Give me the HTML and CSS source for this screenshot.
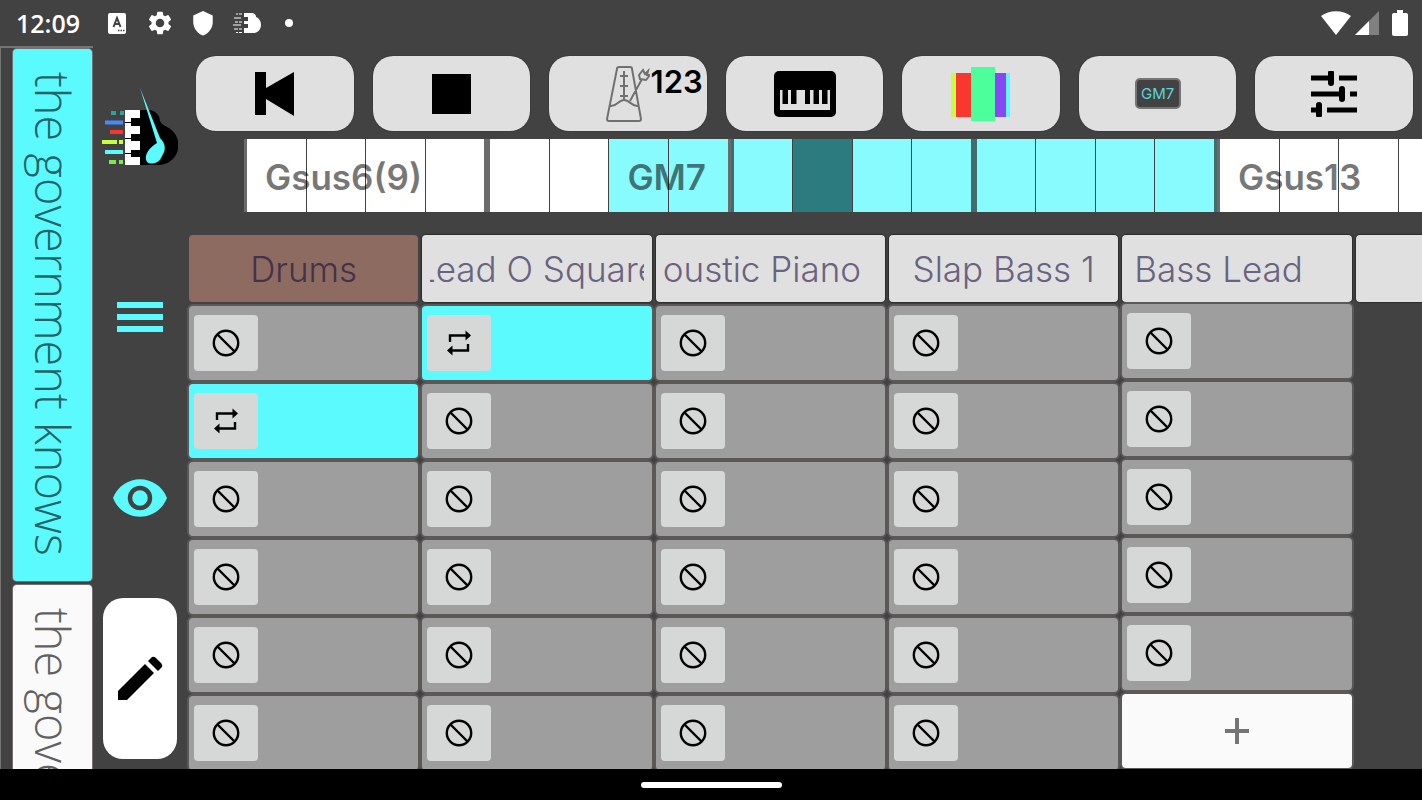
FILE: index.html
```
<!DOCTYPE html>
<html lang="en">
<head>
    <meta charset="UTF-8">
    <meta name="viewport" content="width=device-width, initial-scale=1.0">
    <title>the government knows</title>
    <link rel="stylesheet" href="styles.css">
</head>
<body>
    <svg class="sprite" aria-hidden="true">
        <symbol id="ban" viewBox="0 0 28 28">
            <circle cx="14" cy="14" r="12.2" fill="none" stroke="#000" stroke-width="2.4"/>
            <path d="M5.5 5.5l17 17" stroke="#000" stroke-width="2.4"/>
        </symbol>
        <symbol id="loop" viewBox="0 0 28 28">
            <path d="M5 13V6.500h17M23 15v6.500H6" fill="none" stroke="#000" stroke-width="2.4"/>
            <path d="M20.500 1.500l5.500 5-5.500 5zM7.500 16.500l-5.500 5 5.500 5z"/>
        </symbol>
    </svg>

    <!-- Status bar -->
    <header class="status-bar">
        <span class="clock">12:09</span>
        <svg class="status-icon" viewBox="0 0 26 26" fill="#fff">
            <rect x="4" y="3" width="18" height="21" rx="2"/>
            <path d="M9.500 17L13 8l3.500 9M10.500 14h5" fill="none" stroke="#424242" stroke-width="2"/>
            <path d="M14 20.500h1.500M16.500 20.500H18M19 20.500h1.500" stroke="#424242" stroke-width="1.500"/>
        </svg>
        <svg class="status-icon" viewBox="1 1 22 22" fill="#fff">
            <path d="M19.140 12.940c.04-.3.06-.61.06-.94s-.02-.64-.07-.94l2.030-1.580a.49.49 0 0 0 .12-.61l-1.920-3.320a.49.49 0 0 0-.59-.22l-2.390.96a7 7 0 0 0-1.620-.94l-.36-2.540A.48.48 0 0 0 13.920 2.400h-3.840a.48.48 0 0 0-.47.410l-.36 2.540a7 7 0 0 0-1.620.94l-2.390-.96a.48.48 0 0 0-.59.220L2.740 8.870a.48.48 0 0 0 .12.610l2.030 1.580a6 6 0 0 0 0 1.880l-2.030 1.580a.49.49 0 0 0-.12.610l1.920 3.320c.12.220.37.290.59.220l2.390-.96c.5.380 1.030.7 1.620.94l.36 2.540c.05.240.24.410.48.410h3.840c.24 0 .44-.17.470-.41l.36-2.540a7 7 0 0 0 1.620-.94l2.390.96c.22.080.47 0 .59-.22l1.920-3.320a.48.48 0 0 0-.12-.61zM12 15.600a3.600 3.600 0 1 1 0-7.200 3.600 3.600 0 0 1 0 7.200z"/>
        </svg>
        <svg class="status-icon" viewBox="1 0 22 24" fill="#fff">
            <path d="M12 1L3 5v6c0 5.600 3.800 10.700 9 12.500 5.200-1.800 9-6.900 9-12.500V5z"/>
        </svg>
        <svg class="status-piano" viewBox="0 0 28 22" fill="#fff">
            <path d="M15 1h3c4 0 5 2 5 4 3 1 5 4 5 8s-3 8-7 8h-6z"/>
            <path d="M11 1h4v4h-4zM11 9h4v3h-4zM11 16h4v5h-4z"/>
            <path d="M3 2h2M6 2h3M1 6h7M2 10h3M6 10h3M0 13h8M1 17h4M6 17h3M3 20.500h2M6 20.500h3" stroke="#fff" stroke-width="1.200"/>
        </svg>
        <span class="status-dot"></span>
        <span class="status-right">
            <svg width="30" height="26" viewBox="0 0 30 26" fill="#fff">
                <path d="M0 6C8-.5 22-.5 30 6L15 25z"/>
            </svg>
            <svg width="24" height="24" viewBox="0 0 24 24" fill="#fff">
                <path d="M24 0v24H0z" fill="#808080"/>
                <path d="M14 10v14H0z"/>
            </svg>
            <svg width="16" height="26" viewBox="0 0 16 26" fill="#fff">
                <path d="M5 0h6v3h3a2 2 0 0 1 2 2v19a2 2 0 0 1-2 2H2a2 2 0 0 1-2-2V5a2 2 0 0 1 2-2h3z"/>
            </svg>
        </span>
    </header>

    <div class="app">
        <!-- Sections -->
        <nav class="sections">
            <button class="section active">the government knows</button>
            <button class="section">the government knows</button>
        </nav>

        <aside class="rail">
            <svg class="logo" viewBox="0 0 76 78">
                <path d="M38 22h8c8 0 12 6 12 11 2 4 4 4 7 6a20 20 0 0 1-10 38H38z" fill="#000"/>
                <path d="M23 22h15v55H23z" fill="#fff"/>
                <path d="M23 34.500h8M23 50.500h8M23 65.500h8" stroke="#000" stroke-width="1.200"/>
                <path d="M29 30h10v8H29zM29 46h10v7H29zM29 62h10v7H29z" fill="#000"/>
                <path d="M9 25h5M18 25h4" stroke="#26a69a" stroke-width="4"/>
                <path d="M3 34.500h18" stroke="#448aff" stroke-width="4"/>
                <path d="M8 44h13" stroke="#f9372f" stroke-width="4"/>
                <path d="M0 54h15M17 54h4" stroke="#c6ff41" stroke-width="4"/>
                <path d="M3 64h18" stroke="#5bfaff" stroke-width="4"/>
                <path d="M7 74h7M17 74h4" stroke="#76ee3f" stroke-width="4"/>
                <path d="M38 0l20 50c6 6 6 12 2 18-3 8-11 9-15 6-4-7 3-15 10-19z" fill="#5bfaff"/>
            </svg>
            <button class="rail-button menu" aria-label="Menu"><i></i><i></i><i></i></button>
            <button class="rail-button" aria-label="View">
                <svg width="56" height="40" viewBox="0 0 56 40">
                    <path d="M1 20C11-5 45-5 55 20 45 45 11 45 1 20z" fill="#5bfaff"/>
                    <circle cx="28" cy="20" r="10" fill="none" stroke="#424242" stroke-width="4.500"/>
                </svg>
            </button>
            <button class="edit-button" aria-label="Edit">
                <svg width="46" height="46" viewBox="0 0 46 46">
                    <path d="M1 36L28 9l9 9-27 27H1zM31 6l4-4q2-1 4 1l5 5q2 2 1 4l-4 4z"/>
                </svg>
            </button>
        </aside>

        <main class="main">
            <div class="toolbar">
                <button class="tool" aria-label="Rewind">
                    <svg width="40" height="44" viewBox="0 0 40 44"><path d="M0 0h11v16L39 0v44L11 27v16H0z"/></svg>
                </button>
                <button class="tool" aria-label="Stop">
                    <svg width="40" height="40" viewBox="0 0 40 40"><path d="M1 0h39v40H1z"/></svg>
                </button>
                <button class="tool" aria-label="Metronome">
                    <svg class="metronome" width="44" height="56" viewBox="0 0 44 56" fill="none" stroke="#707070" stroke-width="2">
                        <path d="M13 1h11q2 0 2 2l9 50q0 2-2 2H3q-2 0-2-2L11 3q0-2 2-2zM4 40c7 1 8-6 14-6s8 7 14 6M18 5v29M14 10h8M14 20h8M14 30h8M24 35L36 13M34 13l-1-4 4-5 2 4 3-3-1 4 3 0-4 5z"/>
                    </svg>
                    <span class="count">123</span>
                </button>
                <button class="tool" aria-label="Keyboard">
                    <svg width="62" height="46" viewBox="0 0 62 46">
                        <rect width="62" height="46" rx="5"/>
                        <path d="M6 19h50v20H6z" fill="#e0e0e0"/>
                        <path d="M8.500 19H14v14H8.500zM17 19h5.500v14H17zM31 19h5v14h-5zM39.500 19H45v14h-5.500zM48 19h5.500v14H48z"/>
                    </svg>
                </button>
                <button class="tool" aria-label="Colors">
                    <svg width="60" height="56" viewBox="0 0 60 56">
                        <path d="M0 7h6v44H0z" fill="#c6ff41"/>
                        <path d="M5 7h16v44H5z" fill="#f9372f"/>
                        <path d="M44 7h11v44H44z" fill="#8a45f5"/>
                        <path d="M55 7h4v44h-4z" fill="#5bfaff"/>
                        <path d="M20 1h24v54H20z" fill="#4cff9a"/>
                    </svg>
                </button>
                <button class="tool" aria-label="Chord"><span class="badge">GM7</span></button>
                <button class="tool" aria-label="Mixer">
                    <svg width="46" height="46" viewBox="0 0 46 46" stroke="#000" stroke-width="5" fill="none">
                        <path d="M0 7h20M28 7h18M0 23h30M39 23h7M0 39h7M16 39h30"/>
                        <path d="M20 2v10M31 18v10M8 34v10" stroke-width="6" stroke-linecap="round"/>
                    </svg>
                </button>
            </div>

            <!-- Harmony -->
            <div class="beats">
                <div class="measure"><i><span class="chord">Gsus6(9)</span></i><i></i><i></i><i></i></div>
                <div class="measure"><i></i><i></i><i class="on"><span class="chord">GM7</span></i><i class="on"></i></div>
                <div class="measure lit"><i></i><i class="current"></i><i></i><i></i></div>
                <div class="measure lit"><i></i><i></i><i></i><i></i></div>
                <div class="measure"><i><span class="chord">Gsus13</span></i><i></i><i></i><i></i></div>
            </div>

            <div class="parts">
                <section class="part">
                    <button class="part-name drums"><span>Drums</span></button>
                    <div class="melody"><button aria-label="Off"><svg><use href="#ban"/></svg></button></div>
                    <div class="melody playing"><button aria-label="Loop"><svg><use href="#loop"/></svg></button></div>
                    <div class="melody"><button aria-label="Off"><svg><use href="#ban"/></svg></button></div>
                    <div class="melody"><button aria-label="Off"><svg><use href="#ban"/></svg></button></div>
                    <div class="melody"><button aria-label="Off"><svg><use href="#ban"/></svg></button></div>
                    <div class="melody"><button aria-label="Off"><svg><use href="#ban"/></svg></button></div>
                </section>
                <section class="part">
                    <button class="part-name"><span>Lead O Square</span></button>
                    <div class="melody playing"><button aria-label="Loop"><svg><use href="#loop"/></svg></button></div>
                    <div class="melody"><button aria-label="Off"><svg><use href="#ban"/></svg></button></div>
                    <div class="melody"><button aria-label="Off"><svg><use href="#ban"/></svg></button></div>
                    <div class="melody"><button aria-label="Off"><svg><use href="#ban"/></svg></button></div>
                    <div class="melody"><button aria-label="Off"><svg><use href="#ban"/></svg></button></div>
                    <div class="melody"><button aria-label="Off"><svg><use href="#ban"/></svg></button></div>
                </section>
                <section class="part">
                    <button class="part-name scroll-end"><span>Acoustic Piano</span></button>
                    <div class="melody"><button aria-label="Off"><svg><use href="#ban"/></svg></button></div>
                    <div class="melody"><button aria-label="Off"><svg><use href="#ban"/></svg></button></div>
                    <div class="melody"><button aria-label="Off"><svg><use href="#ban"/></svg></button></div>
                    <div class="melody"><button aria-label="Off"><svg><use href="#ban"/></svg></button></div>
                    <div class="melody"><button aria-label="Off"><svg><use href="#ban"/></svg></button></div>
                    <div class="melody"><button aria-label="Off"><svg><use href="#ban"/></svg></button></div>
                </section>
                <section class="part">
                    <button class="part-name"><span>Slap Bass 1</span></button>
                    <div class="melody"><button aria-label="Off"><svg><use href="#ban"/></svg></button></div>
                    <div class="melody"><button aria-label="Off"><svg><use href="#ban"/></svg></button></div>
                    <div class="melody"><button aria-label="Off"><svg><use href="#ban"/></svg></button></div>
                    <div class="melody"><button aria-label="Off"><svg><use href="#ban"/></svg></button></div>
                    <div class="melody"><button aria-label="Off"><svg><use href="#ban"/></svg></button></div>
                    <div class="melody"><button aria-label="Off"><svg><use href="#ban"/></svg></button></div>
                </section>
                <section class="part short">
                    <button class="part-name scroll-start"><span>Bass Lead</span></button>
                    <div class="melody"><button aria-label="Off"><svg><use href="#ban"/></svg></button></div>
                    <div class="melody"><button aria-label="Off"><svg><use href="#ban"/></svg></button></div>
                    <div class="melody"><button aria-label="Off"><svg><use href="#ban"/></svg></button></div>
                    <div class="melody"><button aria-label="Off"><svg><use href="#ban"/></svg></button></div>
                    <div class="melody"><button aria-label="Off"><svg><use href="#ban"/></svg></button></div>
                    <button class="add" aria-label="Add melody">
                        <svg width="24" height="26" viewBox="0 0 24 26"><path d="M12 0v26M0 13h24" stroke="#757575" stroke-width="4"/></svg>
                    </button>
                </section>
                <section class="part">
                    <button class="part-name" aria-label="Add part"></button>
                </section>
            </div>
        </main>
    </div>

    <footer class="nav-bar"><span class="pill"></span></footer>
</body>
</html>
```
FILE: styles.css
```
* {
    margin: 0;
    padding: 0;
    box-sizing: border-box;
}

body {
    background-color: #424242;
    height: 100vh;
    display: flex;
    flex-direction: column;
    overflow: hidden;
    font-family: Inter, "Liberation Sans", sans-serif;
}

button {
    border: none;
    font-family: inherit;
    cursor: pointer;
}

.sprite {
    display: none;
}

/* Status bar */
.status-bar {
    flex: none;
    height: 46px;
    padding: 0 14px 0 16px;
    display: flex;
    align-items: center;
    color: #fff;
}

.clock {
    width: 88px;
    font-family: "Open Sans", sans-serif;
    font-size: 25px;
    font-weight: 600;
}

.status-icon {
    width: 26px;
    height: 26px;
    margin-right: 17px;
}

.status-piano {
    width: 28px;
    height: 22px;
}

.status-dot {
    width: 8px;
    height: 8px;
    margin-left: 24px;
    border-radius: 50%;
    background-color: #fff;
}

.status-right {
    margin-left: auto;
    display: flex;
    align-items: center;
    gap: 4px;
}

.status-right svg:last-child {
    margin-left: 9px;
}

.app {
    flex: 1;
    min-height: 0;
    display: flex;
    overflow: hidden;
}

/* Sections */
.sections {
    flex: none;
    width: 93px;
    padding: 1px 1px 0 12px;
    border-top: 2px solid #757575;
    border-left: 1px solid #757575;
    display: flex;
    flex-direction: column;
    gap: 4px;
}

.section {
    flex: none;
    padding: 23px 0 25px;
    border-radius: 4px;
    background-color: #fafafa;
    box-shadow: 0 0 0 1px #757070;
    color: #616161;
    writing-mode: vertical-rl;
    font-family: "Open Sans", sans-serif;
    font-size: 47px;
    font-weight: 300;
    line-height: 79px;
    text-align: left;
    white-space: nowrap;
}

.section.active {
    background-color: #5bfaff;
    color: #246466;
}

/* Left rail */
.rail {
    flex: none;
    width: 94px;
    padding: 42px 0 10px;
    display: flex;
    flex-direction: column;
    align-items: center;
    justify-content: space-between;
}

.logo {
    width: 76px;
    height: 78px;
}

.rail-button {
    width: 56px;
    height: 50px;
    background: none;
    display: flex;
    flex-direction: column;
    align-items: center;
    justify-content: center;
}

.menu {
    gap: 6px;
    margin: 51px 0 55px;
}

.menu i {
    width: 46px;
    height: 6px;
    background-color: #5bfaff;
}

.edit-button {
    width: 74px;
    height: 161px;
    border-radius: 20px;
    background-color: #fff;
    display: flex;
    align-items: center;
    justify-content: center;
}

.main {
    flex: 1;
    min-width: 0;
    padding-top: 10px;
}

.toolbar {
    display: flex;
    gap: 19px;
    padding: 0 9px;
}

.tool {
    flex: 1;
    min-width: 0;
    height: 75px;
    border-radius: 20px;
    background-color: #e0e0e0;
    box-shadow: 0 0 1px #000;
    display: flex;
    align-items: center;
    justify-content: center;
    position: relative;
}

.count {
    position: absolute;
    top: 6px;
    right: 4px;
    font-size: 31px;
    font-weight: 600;
    line-height: 40px;
}

.badge {
    width: 46px;
    height: 31px;
    border: 2px solid #757575;
    border-radius: 5px;
    background-color: #424242;
    color: #5bd5da;
    font-size: 15px;
    line-height: 27px;
}

/* Harmony */
.beats {
    margin: 8px 0 0 57px;
    height: 73px;
    display: flex;
    overflow: hidden;
}

.measure {
    flex: 0 0 20.65%;
    display: flex;
    border: solid #6b6b6b;
    border-width: 0 3px;
}

.measure i {
    flex: 1;
    background-color: #fff;
    position: relative;
    font-style: normal;
}

.measure i + i {
    border-left: 1px solid #424242;
}

.measure .on,
.measure.lit i {
    background-color: #88fbff;
}

.measure.lit {
    border-color: #426b6b;
}

.measure.lit .current {
    background-color: #2c7b7f;
}

.chord {
    position: absolute;
    z-index: 1;
    left: 18px;
    top: 0;
    color: rgba(0, 0, 0, 0.55);
    font-size: 35px;
    font-weight: 600;
    line-height: 76px;
}

/* Parts */
.parts {
    margin: 23px 0 0 2px;
    display: flex;
    gap: 4px;
}

.part {
    flex: 0 0 18.6%;
    min-width: 0;
    display: flex;
    flex-direction: column;
    gap: 4px;
}

.part-name {
    height: 67px;
    padding: 0 8px;
    border-radius: 4px;
    background-color: #e0e0e0;
    box-shadow: 0 0 1px 1px #2c2c2c;
    color: #69637f;
    font-size: 35px;
    font-weight: 300;
}

.part.short .part-name {
    margin-bottom: -2px;
}

.part-name span {
    display: flex;
    justify-content: center;
    overflow: hidden;
    white-space: nowrap;
}

.part-name.drums {
    background-color: #8d6b61;
    box-shadow: none;
    color: #44324a;
}

.part-name.scroll-end span {
    justify-content: flex-end;
    padding-right: 16px;
}

.part-name.scroll-start span {
    justify-content: flex-start;
    padding-left: 4px;
}

.melody,
.add {
    height: 74px;
    border-radius: 4px;
    background-color: #9e9e9e;
    box-shadow: 0 0 0 2px #5b5858;
}

.melody {
    padding: 0 5px;
    display: flex;
    align-items: center;
}

.melody.playing {
    background-color: #5bfaff;
}

.melody button {
    width: 64px;
    height: 56px;
    border-radius: 4px;
    background-color: #d6d8d7;
    display: flex;
    align-items: center;
    justify-content: center;
}

.melody svg {
    width: 28px;
    height: 28px;
}

.add {
    background-color: #fafafa;
    display: flex;
    align-items: center;
    justify-content: center;
}

.nav-bar {
    flex: none;
    height: 31px;
    background-color: #000;
    display: flex;
    align-items: center;
    justify-content: center;
    position: relative;
}

.pill {
    width: 141px;
    height: 6px;
    border-radius: 3px;
    background-color: #fff;
}
```
